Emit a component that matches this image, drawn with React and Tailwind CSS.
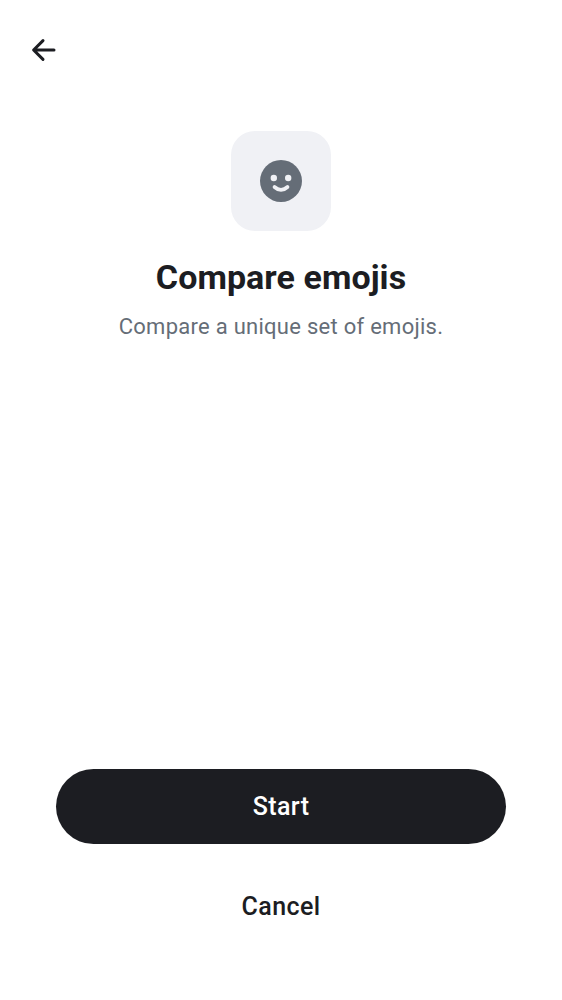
export default function App() {
  return (
    <main className="flex h-[1000px] w-full flex-col items-center bg-white font-['Roboto',sans-serif] text-[#1c1d22]">
      <header className="flex h-[100px] w-full items-center pl-[31px]">
        <button type="button" aria-label="Back">
          <svg className="block" width="25" height="24" viewBox="0 0 25 24" fill="none" stroke="currentColor" strokeWidth="3" strokeLinecap="round" strokeLinejoin="round">
            <path d="M23 12H3M12 2.6 2.6 12l9.4 9.4" />
          </svg>
        </button>
      </header>
      <div className="mt-[31px] flex size-[100px] items-center justify-center rounded-[24px] bg-[#f0f1f5]">
        <svg width="42" height="42" viewBox="0 0 42 42">
          <circle cx="21" cy="21" r="21" fill="#656d77" />
          <circle cx="13.8" cy="18" r="3.2" fill="#f0f1f5" />
          <circle cx="28.2" cy="18" r="3.2" fill="#f0f1f5" />
          <path d="M14.5 27Q21 32.8 27.5 27" fill="none" stroke="#f0f1f5" strokeWidth="3.7" strokeLinecap="round" />
        </svg>
      </div>
      <h1 className="mt-[26px] text-[34px] leading-[40px] font-bold tracking-[0.06px]">Compare emojis</h1>
      <p className="mt-[15px] text-[22px] leading-[30px] tracking-[0.27px] text-[#656d77]">Compare a unique set of emojis.</p>
      <div className="mt-auto mb-[56px] flex w-[450px] flex-col gap-[25px]">
        <button type="button" className="h-[75px] rounded-full bg-[#1c1d22] text-[25px] font-medium tracking-[0.4px] text-white">Start</button>
        <button type="button" className="h-[75px] rounded-full text-[25px] font-medium tracking-[0.4px]">Cancel</button>
      </div>
    </main>
  );
}
